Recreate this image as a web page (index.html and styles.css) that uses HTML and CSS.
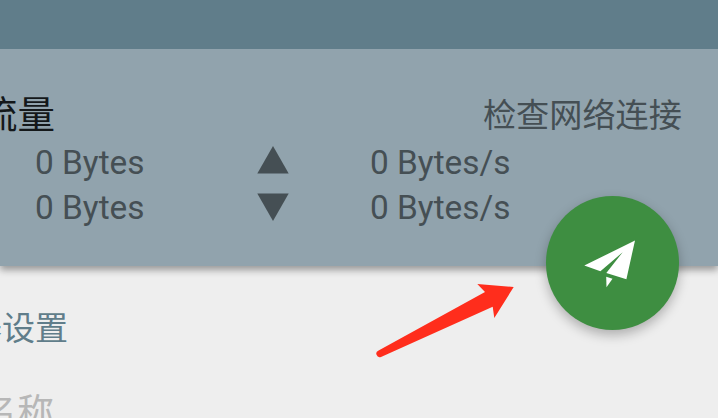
FILE: index.html
```html
<!DOCTYPE html>
<html lang="zh-CN">
<head>
<meta charset="utf-8">
<title>流量</title>
<link rel="stylesheet" href="styles.css">
</head>
<body>
<div class="screen">
  <header class="toolbar"></header>
  <section class="panel">
    <div class="panel-head">
      <div class="clip title"><span>流量</span></div>
      <span class="status">检查网络连接</span>
    </div>
    <div class="stats">
      <span>0 Bytes</span>
      <svg class="tri" viewBox="0 0 32 28"><path d="M16 0L31.700 27.500H0.300Z"/></svg>
      <span>0 Bytes/s</span>
      <span>0 Bytes</span>
      <svg class="tri down" viewBox="0 0 32 28"><path d="M0.300 0.500H31.700L16 28Z"/></svg>
      <span>0 Bytes/s</span>
    </div>
  </section>
  <main class="settings">
    <div class="clip section"><span>服务器设置</span></div>
    <div class="clip field"><span>配置名称</span></div>
  </main>
  <button class="fab" aria-label="连接">
    <svg viewBox="0 0 133 133"><path d="M89 43.400L38.300 68.600L54.400 74.200L76.700 55.200L60.300 75.900L80.400 82.200Z"/><path d="M60.200 79.800L66.500 81.800L60.500 90.200Z"/></svg>
  </button>
  <svg class="arrow" viewBox="0 0 140 78"><path d="M137.700 4L101.300 0.900L109 9L2.600 67.400A3.300 3.300 0 0 0 5 73.900L116.700 23.700L118.300 35Z"/></svg>
</div>
</body>
</html>
```
FILE: styles.css
```css
* { box-sizing: border-box; }
body { margin: 0; }
.screen {
  position: relative;
  width: 718px;
  height: 418px;
  overflow: hidden;
  background: #eeeeee;
  font-family: Roboto, "Noto Sans CJK SC", sans-serif;
  font-size: 33px;
}
.toolbar { height: 49px; background: #607d8a; }
.panel {
  height: 217px;
  padding-top: 38px;
  background: #91a3ad;
  box-shadow: 0 4px 7px rgba(0, 0, 0, .36);
  clip-path: inset(0 0 -20px 0);
  color: #454f54;
}
.panel-head {
  display: flex;
  justify-content: space-between;
  height: 52px;
  padding-right: 36px;
}
.clip {
  display: flex;
  justify-content: flex-end;
  overflow: hidden;
  white-space: nowrap;
}
.clip span { flex: none; }
.title { width: 55px; line-height: 57px; font-size: 37.5px; color: #14181a; }
.status { line-height: 58px; font-size: 33.2px; }
.stats {
  display: grid;
  grid-template-columns: 222px 113px auto;
  grid-auto-rows: 45px;
  padding-left: 35px;
  line-height: 48px;
  font-size: 33.4px;
}
.tri { width: 32px; height: 28px; margin-top: 7px; fill: #454f54; }
.down { margin-top: 9px; }
.settings { padding-top: 36px; }
.section { width: 68px; height: 52px; line-height: 54px; color: #607d8a; }
.field { width: 54px; height: 60px; margin-top: 33px; line-height: 54px; font-size: 37px; color: #b7b7b7; }
.fab {
  position: absolute;
  left: 546px;
  top: 196.4px;
  width: 133.400px;
  height: 133.400px;
  padding: 0;
  border: 0;
  border-radius: 50%;
  background: #3e8e41;
  box-shadow: 0 5px 12px rgba(0, 0, 0, .27);
}
.fab svg { display: block; width: 133px; height: 133px; fill: #fff; }
.arrow {
  position: absolute;
  left: 376px;
  top: 283px;
  width: 140px;
  height: 78px;
  fill: #ff2d1c;
}
```
